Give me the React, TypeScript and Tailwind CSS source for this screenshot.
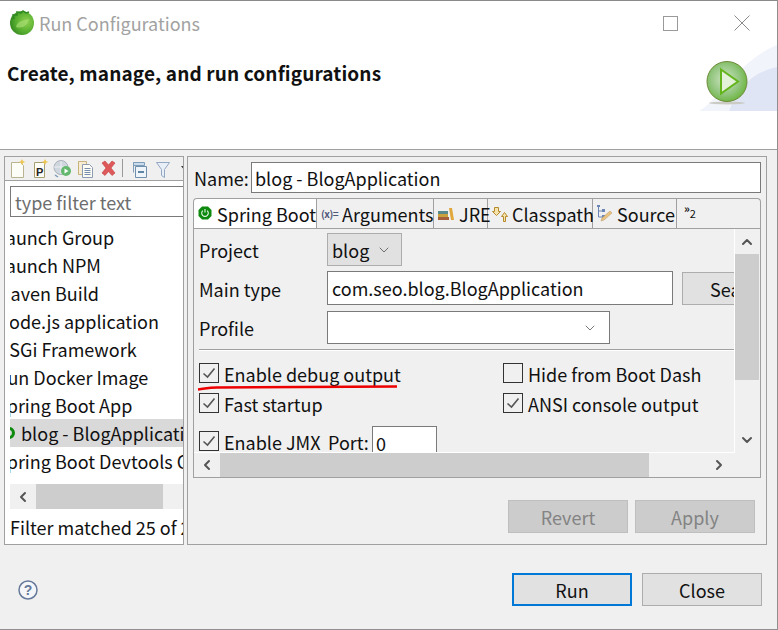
import { ChevronDown, ChevronLeft, ChevronRight, ChevronUp } from "lucide-react";

const listItems = [
    { label: "Launch Group" },
    { label: "Launch NPM" },
    { label: "Maven Build" },
    { label: "Node.js application" },
    { label: "OSGi Framework" },
    { label: "Run Docker Image" },
    { label: "Spring Boot App" },
    { label: "blog - BlogApplication", child: true },
    { label: "Spring Boot Devtools Client" },
];

function SpringLogo() {
    return (
        <svg width="26" height="26" viewBox="0 0 26 26" className="shrink-0">
            <defs>
                <radialGradient id="springFill" cx="0.68" cy="0.45" r="0.8">
                    <stop offset="0" stopColor="#8fd14f" />
                    <stop offset="0.55" stopColor="#55ad2e" />
                    <stop offset="1" stopColor="#2a7a1c" />
                </radialGradient>
            </defs>
            <circle cx="13" cy="13" r="12" fill="url(#springFill)" />
            <path d="M2 9l3-1-1-3 4 0 0-3 4 1 2-2 3 2 3-1" fill="none" stroke="#2f8a20" strokeWidth="1.5" />
            <path d="M7 17c1-5 6-7 13-8-1 6-6 10-13 8z" fill="#a5dc72" opacity="0.7" />
        </svg>
    );
}

function PlayBadge() {
    return (
        <svg width="46" height="46" viewBox="0 0 46 46">
            <defs>
                <radialGradient id="playFill" cx="0.45" cy="0.45" r="0.65">
                    <stop offset="0" stopColor="#cfe5c2" />
                    <stop offset="0.55" stopColor="#93c680" />
                    <stop offset="1" stopColor="#5fb02a" />
                </radialGradient>
            </defs>
            <ellipse cx="22" cy="43" rx="18" ry="1.5" fill="#c9cbc4" />
            <circle cx="22" cy="21.5" r="20" fill="url(#playFill)" stroke="#6f8a3c" strokeWidth="1" />
            <path d="M16 9.5l17 12-17 12z" fill="#e3f1d8" stroke="#64b41e" strokeWidth="2" />
        </svg>
    );
}

function ToolbarIcons() {
    return (
        <div className="flex items-center h-[23px] pl-[5px] shrink-0 overflow-hidden">
            <svg width="176" height="20" viewBox="0 0 176 20" className="shrink-0">
                {/* new config */}
                <path d="M1.5 3.5h9l3 3v12h-12z" fill="#fdfdf8" stroke="#b9b48f" />
                <path d="M12 0l1.2 2.3 2.3.7-2.3.8-1.2 2.2-1.2-2.2-2.3-.8 2.3-.7z" fill="#eec655" />
                {/* new proto */}
                <path d="M24.5 3.5h10v15h-10z" fill="#fdfdf8" stroke="#a89f70" />
                <text x="26" y="16.5" fontSize="11" fontWeight="700" fontFamily="'Liberation Sans', sans-serif" fill="#222">P</text>
                <path d="M35 0l1.2 2.3 2.3.7-2.3.8-1.2 2.2-1.2-2.2-2.3-.8 2.3-.7z" fill="#eec655" />
                {/* export */}
                <circle cx="51" cy="8.5" r="7" fill="#cfd6de" stroke="#a9b2bc" />
                <path d="M44 8h14M51 2v13" stroke="#eef0f3" />
                <circle cx="56" cy="12" r="5" fill="#63b86d" />
                <path d="M54.5 9.5l4 2.5-4 2.5z" fill="#fff" />
                <path d="M45 16l3 2" stroke="#7d9ab8" strokeWidth="1.5" />
                {/* duplicate */}
                <path d="M68.5 2.5h8v13h-8z" fill="#f5ecd3" stroke="#c7b37b" />
                <path d="M72.5 5.5h7l3 3v10h-10z" fill="#fdfcf4" stroke="#8c9bb1" />
                <path d="M74.5 9.5h6M74.5 11.5h6M74.5 13.5h6M74.5 15.5h6" stroke="#7a8fb0" />
                {/* delete */}
                <path d="M92 4l3-2 3.5 4 3.5-4 3 2-4 5 4 5-3 2.5-3.5-4-3.5 4-3-2.5 4-5z" fill="#de5a5a" stroke="#c23c3c" strokeWidth="0.6" />
                {/* separator */}
                <path d="M112.5 0v18" stroke="#9a9a9a" />
                {/* collapse all */}
                <path d="M123.5 3.5h11v3h-11z" fill="#c8dcee" stroke="#7f9db9" />
                <path d="M123.5 3.5v10" stroke="#7f9db9" />
                <path d="M125.5 7.5h11v11h-11z" fill="#eef4fa" stroke="#6e8fae" />
                <path d="M128 13h6" stroke="#2e5f8a" strokeWidth="1.5" />
                {/* filter */}
                <path d="M146.5 3.5h13l-5 7v8l-3-2v-6z" fill="#e8eff7" stroke="#93a8c4" />
                <path d="M171 7h4l-2 2.5z" fill="#333" />
            </svg>
        </div>
    );
}

function PowerIcon() {
    return (
        <svg width="14" height="14" viewBox="0 0 14 14" className="shrink-0 mb-[2px]">
            <path d="M4 .5h6L13.5 4v6L10 13.5H4L.5 10V4z" fill="#0d8a0d" />
            <path d="M4.8 4.6a3.3 3.3 0 1 0 4.4 0" fill="none" stroke="#e7f5e7" strokeWidth="1.1" />
            <path d="M7 3v3.6" stroke="#e7f5e7" strokeWidth="1.1" />
        </svg>
    );
}

function Tab({ width, children, selected, gap }: { width: string, children: React.ReactNode, selected?: boolean, gap?: string }) {
    return (
        <div className={`${width} h-[30px] flex items-center shrink-0 whitespace-nowrap border-t border-[#a0a0a0] ${selected ? 'bg-white border-l border-r rounded-tl-[4px] pl-[4px] gap-[5px]' : `border-r pl-[4px] ${gap ?? 'gap-[4px]'}`}`}>
            {children}
        </div>
    );
}

function Check({ checked }: { checked: boolean }) {
    return (
        <span className="w-[20px] h-[20px] border border-[#333333] shrink-0 flex items-center justify-center">
            {checked && (
                <svg width="14" height="12" viewBox="0 0 14 12">
                    <path d="M1.5 6.5l4 3.5 7-8.5" fill="none" stroke="#555555" strokeWidth="1.6" />
                </svg>
            )}
        </span>
    );
}

function CheckRow({ checked, label }: { checked: boolean, label: string }) {
    return (
        <div className="flex items-center gap-[5px] h-[20px] whitespace-nowrap">
            <Check checked={checked} />
            <span className="mt-[2px]">{label}</span>
        </div>
    );
}

function Chevron() {
    return <ChevronDown width={16} height={16} strokeWidth={1} className="text-[#333333]" />;
}

export default function App() {
    return (
        <div className="w-[778px] h-[630px] flex flex-col bg-[#f0f0f0] border-r border-b border-[#8f8f8f] overflow-hidden text-[18px] leading-[24px] text-[#111111] font-['Noto_Sans_CJK_KR','Noto_Sans',sans-serif]">
            <div className="h-px bg-[#8a8a8a] shrink-0" />

            {/* title bar + banner */}
            <div className="relative h-[149px] shrink-0 bg-white border-b border-[#a0a0a0]">
                <div className="flex items-center h-[44px] pl-[9px] gap-[4px] text-[#a2a2a2]">
                    <SpringLogo />
                    <span>Run Configurations</span>
                    <div className="ml-auto mr-[27px] flex items-center gap-[56px]">
                        <div className="w-[15px] h-[15px] border border-[#9a9a9a]" />
                        <svg width="16" height="16" viewBox="0 0 16 16">
                            <path d="M.5.5l15 15M15.5.5l-15 15" stroke="#8a8a8a" />
                        </svg>
                    </div>
                </div>
                <div className="pl-[7px] mt-[16px] font-bold text-[19px] tracking-[0.13px]">Create, manage, and run configurations</div>
                <svg width="78" height="66" viewBox="0 0 78 66" className="absolute right-0 top-[44px]">
                    <path d="M0 66C20 55 40 15 78 0V66z" fill="#f2f4fb" />
                    <path d="M30 66C40 40 55 27 78 22V66z" fill="#e0e5f5" />
                </svg>
                <div className="absolute left-[705px] top-[59px]">
                    <PlayBadge />
                </div>
            </div>

            {/* master / detail */}
            <div className="flex pl-[4px] pt-[6px] gap-[3px] shrink-0">
                <div className="w-[180px] h-[389px] shrink-0 border border-[#a0a0a0] bg-white flex flex-col">
                    <div className="bg-[#f0f0f0] border-b border-[#a0a0a0] overflow-hidden shrink-0">
                        <ToolbarIcons />
                    </div>
                    <div className="ml-[5px] mt-[5px] h-[31px] border border-r-0 border-[#7a7a7a] pl-[4px] flex items-center text-[#6d6d6d] shrink-0">type filter text</div>
                    <div className="ml-[5px] mt-[6px] overflow-hidden flex flex-col shrink-0">
                        {listItems.map((item) => (
                            <div key={item.label} className={`h-[28px] flex items-center whitespace-nowrap ${item.child ? 'bg-[#d9d9d9]' : 'ml-[-14px]'}`}>
                                {item.child && (
                                    <span className="w-[5px] h-[12px] mr-[6px] overflow-hidden shrink-0">
                                        <span className="block w-[12px] h-[12px] rounded-full border-[3px] border-[#0d8a0d] ml-[-7px]" />
                                    </span>
                                )}
                                {item.label}
                            </div>
                        ))}
                    </div>
                    <div className="ml-[5px] mt-[9px] h-[25px] bg-[#f0f0f0] flex items-center shrink-0">
                        <div className="w-[26px] flex justify-center">
                            <ChevronLeft width={16} height={16} strokeWidth={3} className="text-[#555555]" />
                        </div>
                        <div className="w-[127px] h-full bg-[#cdcdcd]" />
                    </div>
                    <div className="ml-[5px] mt-[6px] overflow-hidden whitespace-nowrap shrink-0">Filter matched 25 of 25 items</div>
                </div>

                <div className="w-[580px] h-[389px] shrink-0 border border-[#a0a0a0] flex flex-col pl-[5px]">
                    <div className="flex items-center mt-[5px] h-[31px] shrink-0">
                        <span className="w-[57px] ml-[1px] shrink-0">Name:</span>
                        <div className="w-[510px] h-[31px] border border-[#7a7a7a] bg-white pl-[3px] flex items-center">blog - BlogApplication</div>
                    </div>

                    {/* launch tabs */}
                    <div className="flex mt-[5px] w-[568px] shrink-0">
                        <Tab width="w-[124px]" selected>
                            <PowerIcon />
                            <span>Spring Boot</span>
                        </Tab>
                        <Tab width="w-[117px]">
                            <span className="text-[10px] font-bold text-[#50587a] tracking-[-0.5px]">(x)=</span>
                            <span>Arguments</span>
                        </Tab>
                        <Tab width="w-[54px]" gap="gap-[5px]">
                            <svg width="16" height="14" viewBox="0 0 16 14" className="shrink-0">
                                <path d="M0 4h10v3H0z" fill="#5a8a8a" />
                                <path d="M0 7h10v3H0z" fill="#c9a13d" />
                                <path d="M0 10h11v3H0z" fill="#a75f3a" />
                                <path d="M11 1h3l2 12h-3z" fill="#e0a83c" />
                            </svg>
                            <span>JRE</span>
                        </Tab>
                        <Tab width="w-[105px]">
                            <svg width="16" height="16" viewBox="0 0 16 16" className="shrink-0">
                                <path d="M2.5 1.5h4v4h2l-4 4-4-4h2z" fill="#f6e3ad" stroke="#b58a2a" />
                                <path d="M11.5 15.5v-5h-2l3-4 3 4h-2v5z" fill="#f6e3ad" stroke="#b58a2a" />
                            </svg>
                            <span>Classpath</span>
                        </Tab>
                        <Tab width="w-[84px]">
                            <svg width="16" height="18" viewBox="0 0 16 18" className="shrink-0">
                                <path d="M1.5 1v11h4M1.5 6h4" fill="none" stroke="#6b86b5" />
                                <path d="M0 0h3v2H0zM5 4h3v3H5zM5 10h3v3H5z" fill="#6b86b5" />
                                <path d="M4 16l1-3 8-7 2 2-8 7z" fill="#e9c37f" stroke="#b99560" strokeWidth="0.5" />
                            </svg>
                            <span>Source</span>
                        </Tab>
                        <div className="w-[84px] h-[30px] shrink-0 border-t border-r border-[#a0a0a0] rounded-tr-[4px] pl-[7px] pt-[1px] text-[11px] leading-[16px] text-[#111111] flex">
                            <span className="font-bold">»</span>
                            <span className="mt-[5px]">2</span>
                        </div>
                    </div>

                    {/* spring boot tab body */}
                    <div className="w-[568px] h-[250px] shrink-0 border border-[#a0a0a0] flex flex-col bg-[#f0f0f0]">
                        <div className="flex h-[224px] shrink-0">
                            <div className="relative w-[541px] h-[224px] overflow-hidden border-r border-b border-white pl-[5px] pr-0 shrink-0">
                                <div className="flex items-center mt-[4px] h-[33px]">
                                    <span className="w-[128px] shrink-0">Project</span>
                                    <div className="w-[75px] h-[33px] bg-[#e1e1e1] border border-[#adadad] flex items-center justify-between pl-[4px] pr-[9px]">
                                        <span>blog</span>
                                        <Chevron />
                                    </div>
                                </div>
                                <div className="flex items-center mt-[5px] h-[34px]">
                                    <span className="w-[128px] shrink-0 mt-[2px]">Main type</span>
                                    <div className="w-[346px] h-[34px] shrink-0 bg-white border border-[#7a7a7a] flex items-center pl-[4px]">com.seo.blog.BlogApplication</div>
                                    <div className="w-[90px] h-[33px] ml-[9px] mt-[1px] shrink-0 bg-[#e1e1e1] border border-[#adadad] flex items-center pl-[27px]">Search...</div>
                                </div>
                                <div className="flex items-center mt-[6px] h-[33px]">
                                    <span className="w-[128px] shrink-0">Profile</span>
                                    <div className="w-[283px] h-[33px] bg-white border border-[#7a7a7a] flex items-center justify-end pr-[11px]">
                                        <Chevron />
                                    </div>
                                </div>
                                <div className="mt-[5px] border-t border-[#a0a0a0] border-b-white border-b h-[2px]" />
                                <div className="flex mt-[12px]">
                                    <div className="w-[304px] shrink-0 flex flex-col">
                                        <CheckRow checked label="Enable debug output" />
                                        <div className="mt-[10px]">
                                            <CheckRow checked label="Fast startup" />
                                        </div>
                                        <div className="mt-[18px] flex items-center h-[20px] whitespace-nowrap">
                                            <div className="w-[129px] shrink-0">
                                                <CheckRow checked label="Enable JMX" />
                                            </div>
                                            <span className="w-[44px] mt-[2px] shrink-0">Port:</span>
                                            <div className="w-[65px] h-[34px] mt-[4px] bg-white border border-[#7a7a7a] pl-[3px] shrink-0 flex items-center">0</div>
                                        </div>
                                    </div>
                                    <div className="flex flex-col">
                                        <CheckRow checked={false} label="Hide from Boot Dash" />
                                        <div className="mt-[10px]">
                                            <CheckRow checked label="ANSI console output" />
                                        </div>
                                    </div>
                                </div>
                                {/* red marker stroke */}
                                <svg width="204" height="8" viewBox="0 0 204 8" className="absolute left-[3px] top-[154px]">
                                    <path d="M1 6.5C8 6 10 4.5 20 4.5C60 4 120 4 200 3.5" fill="none" stroke="#ee0000" strokeWidth="2.5" />
                                </svg>
                            </div>
                            <div className="w-[24px] flex flex-col items-center shrink-0">
                                <div className="h-[25px] flex items-center justify-center">
                                    <ChevronUp width={16} height={16} strokeWidth={3} className="text-[#555555]" />
                                </div>
                                <div className="w-full h-[126px] bg-[#cdcdcd]" />
                                <div className="h-[73px] w-full flex items-end justify-center pb-[5px]">
                                    <ChevronDown width={16} height={16} strokeWidth={3} className="text-[#555555]" />
                                </div>
                            </div>
                        </div>
                        <div className="flex items-center h-[24px] shrink-0">
                            <div className="w-[26px] flex justify-center">
                                <ChevronLeft width={16} height={16} strokeWidth={3} className="text-[#555555]" />
                            </div>
                            <div className="w-[429px] h-full bg-[#cdcdcd]" />
                            <div className="ml-[62px] w-[16px] flex justify-center">
                                <ChevronRight width={16} height={16} strokeWidth={3} className="text-[#555555]" />
                            </div>
                        </div>
                    </div>

                    <div className="flex justify-end gap-[7px] mt-[22px] mr-[11px] text-[#838383]">
                        <div className="w-[120px] h-[33px] bg-[#cccccc] border border-[#bfbfbf] flex items-center justify-center">Revert</div>
                        <div className="w-[120px] h-[33px] bg-[#cccccc] border border-[#bfbfbf] flex items-center justify-center">Apply</div>
                    </div>
                </div>
            </div>

            {/* dialog buttons */}
            <div className="flex items-center mt-[28px] pl-[18px]">
                <svg width="20" height="20" viewBox="0 0 20 20" className="shrink-0">
                    <circle cx="10" cy="10" r="9" fill="#f4f6f9" stroke="#66799a" strokeWidth="1.5" />
                    <text x="10" y="15" textAnchor="middle" fontSize="14" fontWeight="700" fontFamily="'Liberation Sans', sans-serif" fill="#66799a">?</text>
                </svg>
                <div className="ml-auto flex gap-[10px] mr-[15px]">
                    <div className="w-[120px] h-[33px] bg-[#e1e1e1] border-2 border-[#0078d7] flex items-center justify-center">Run</div>
                    <div className="w-[120px] h-[33px] bg-[#e1e1e1] border border-[#adadad] flex items-center justify-center">Close</div>
                </div>
            </div>
        </div>
    );
}
